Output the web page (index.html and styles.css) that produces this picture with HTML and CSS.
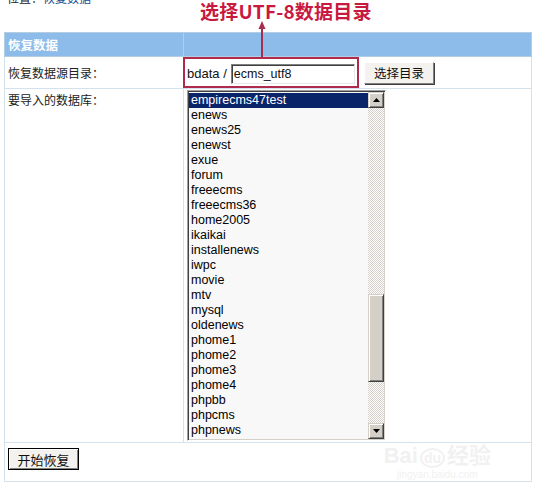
FILE: index.html
```html
<!DOCTYPE html>
<html lang="zh-CN">
<head>
    <meta charset="UTF-8">
    <title>恢复数据</title>
    <link rel="stylesheet" href="styles.css">
</head>
<body>

<div class="crumb">位置：<a href="#">恢复数据</a></div>

<!-- annotation over the screenshot -->
<div class="note">选择UTF-8数据目录</div>
<svg class="arrow" width="10" height="36" viewBox="0 0 10 36">
    <polygon points="5,0 1.5,8 8.5,8" fill="#a82c4c"/>
    <line x1="5" y1="6" x2="5" y2="36" stroke="#a82c4c" stroke-width="2"/>
</svg>

<table class="form-table">
    <tr class="head">
        <td class="label">恢复数据</td>
        <td></td>
    </tr>
    <tr>
        <td class="label">恢复数据源目录：</td>
        <td class="path-cell">
            <span class="pick">bdata / <input type="text" value="ecms_utf8"></span>
            <button class="btn">选择目录</button>
        </td>
    </tr>
    <tr>
        <td class="label top">要导入的数据库：</td>
        <td class="list-cell">
            <div class="listbox">
                <ul class="items">
                    <li class="selected">empirecms47test</li>
                    <li>enews</li>
                    <li>enews25</li>
                    <li>enewst</li>
                    <li>exue</li>
                    <li>forum</li>
                    <li>freeecms</li>
                    <li>freeecms36</li>
                    <li>home2005</li>
                    <li>ikaikai</li>
                    <li>installenews</li>
                    <li>iwpc</li>
                    <li>movie</li>
                    <li>mtv</li>
                    <li>mysql</li>
                    <li>oldenews</li>
                    <li>phome1</li>
                    <li>phome2</li>
                    <li>phome3</li>
                    <li>phome4</li>
                    <li>phpbb</li>
                    <li>phpcms</li>
                    <li>phpnews</li>
                </ul>
                <div class="scrollbar">
                    <div class="sb-btn">
                        <svg width="7" height="4" viewBox="0 0 7 4"><polygon points="3.5,0 7,4 0,4" fill="#000"/></svg>
                    </div>
                    <div class="sb-track">
                        <div class="sb-thumb"></div>
                    </div>
                    <div class="sb-btn">
                        <svg width="7" height="4" viewBox="0 0 7 4"><polygon points="0,0 7,0 3.5,4" fill="#000"/></svg>
                    </div>
                </div>
            </div>
        </td>
    </tr>
    <tr>
        <td colspan="2" class="foot">
            <button class="btn start">开始恢复</button>
            <div class="watermark">Bai<span>du</span>经验<small>jingyan.baidu.com</small></div>
        </td>
    </tr>
</table>

</body>
</html>
```

FILE: styles.css
```css
body {
    margin: 0;
    padding: 0 0 0 4px;
    background-color: #fff;
    font-family: "Liberation Sans", "Noto Sans CJK SC", sans-serif;
    font-size: 12px;
    color: #222;
    position: relative;
}

.crumb {
    margin-top: -8px;
    padding-left: 3px;
    height: 14px;
    line-height: 14px;
}

.crumb a {
    color: #1b4f8f;
    text-decoration: none;
}

.note {
    position: absolute;
    left: 200px;
    top: 0;
    color: #c8193f;
    font-family: "Noto Sans CJK SC", sans-serif;
    font-size: 19px;
    font-weight: bold;
    line-height: 21px;
    letter-spacing: 0.2px;
}

.arrow {
    position: absolute;
    left: 257px;
    top: 21px;
}

.form-table {
    margin-top: 26px;
    width: 528px;
    border-collapse: collapse;
    border: 1px solid #b3cde3;
}

.form-table td {
    border: 1px solid #d4e2ee;
    padding: 0 3px;
}

.form-table td.label {
    width: 172px;
    vertical-align: middle;
}

.form-table td.top {
    vertical-align: top;
    padding-top: 2px;
}

.head td {
    background-color: #8dbbea;
    border-color: #b3cde3;
    height: 23px;
    color: #fff;
    font-weight: bold;
    font-size: 12.5px;
}

.path-cell {
    height: 30px;
    white-space: nowrap;
}

.pick {
    display: inline-flex;
    align-items: center;
    box-sizing: border-box;
    height: 31px;
    margin-left: -4px;
    padding: 2px 2px 0 2px;
    border: 2px solid #b02a4c;
    font-size: 13px;
    color: #111;
    vertical-align: middle;
}

.pick input {
    margin-left: 4px;
    width: 124px;
    height: 20px;
    box-sizing: border-box;
    padding: 0 2px;
    border: 1px solid;
    border-color: #808080 #e8e8e8 #e8e8e8 #808080;
    box-shadow: inset 1px 1px #404040;
    font-family: "Liberation Sans", sans-serif;
    font-size: 12.5px;
    color: #111;
    outline: none;
}

.btn {
    height: 22px;
    box-sizing: border-box;
    padding: 0 9px;
    background-color: #f3f2ee;
    border: 1px solid;
    border-color: #fff #808080 #808080 #fff;
    box-shadow: 1px 1px #404040;
    font-family: "Noto Sans CJK SC", sans-serif;
    font-size: 12.5px;
    color: #111;
    vertical-align: middle;
    margin-left: 2px;
}

.list-cell {
    padding: 1px 3px !important;
    vertical-align: top;
}

.listbox {
    display: flex;
    width: 199px;
    height: 351px;
    box-sizing: border-box;
    border: 1px solid;
    border-color: #a0a0a0 #fff #fff #a0a0a0;
    box-shadow: inset 1px 1px #404040, inset -1px -1px #d4d0c8;
    padding: 1px;
    background-color: #f8f8f8;
}

.items {
    flex: 1;
    list-style: none;
    margin: 0;
    padding: 1px 0 0 0;
    overflow: hidden;
    font-size: 12.5px;
    color: #000;
}

.items li {
    height: 15px;
    line-height: 15px;
    padding-left: 2px;
}

.items li.selected {
    background-color: #0a246a;
    color: #fff;
}

.scrollbar {
    width: 16px;
    display: flex;
    flex-direction: column;
}

.sb-btn {
    width: 16px;
    height: 16px;
    box-sizing: border-box;
    display: flex;
    align-items: center;
    justify-content: center;
    background-color: #d4d0c8;
    border: 1px solid;
    border-color: #d4d0c8 #404040 #404040 #d4d0c8;
    box-shadow: inset 1px 1px #fff, inset -1px -1px #808080;
}

.sb-track {
    flex: 1;
    background: repeating-conic-gradient(#fff 0 25%, #d4d0c8 0 50%) 0 0 / 2px 2px;
}

.sb-thumb {
    margin-top: 186px;
    height: 88px;
    box-sizing: border-box;
    background-color: #d4d0c8;
    border: 1px solid;
    border-color: #d4d0c8 #404040 #404040 #d4d0c8;
    box-shadow: inset 1px 1px #fff, inset -1px -1px #808080;
}

.foot {
    height: 32px;
    padding: 5px 3px 1px 3px !important;
    vertical-align: top;
    position: relative;
}

.btn.start {
    width: 71px;
    height: 22px;
    margin-left: 0;
    padding: 0;
    border: 1px solid #000;
    box-shadow: inset 1px 1px #fff, inset -1px -1px #808080;
    font-size: 13px;
}

.watermark {
    position: absolute;
    right: 40px;
    top: 1px;
    color: #f1f1f1;
    font-size: 22px;
    font-weight: bold;
    line-height: 24px;
    text-align: center;
}

.watermark span {
    border: 2px solid #f1f1f1;
    border-radius: 50%;
    font-size: 14px;
    padding: 0 2px;
    margin: 0 2px;
}

.watermark small {
    display: block;
    font-size: 10px;
    line-height: 10px;
    font-weight: normal;
}
```
